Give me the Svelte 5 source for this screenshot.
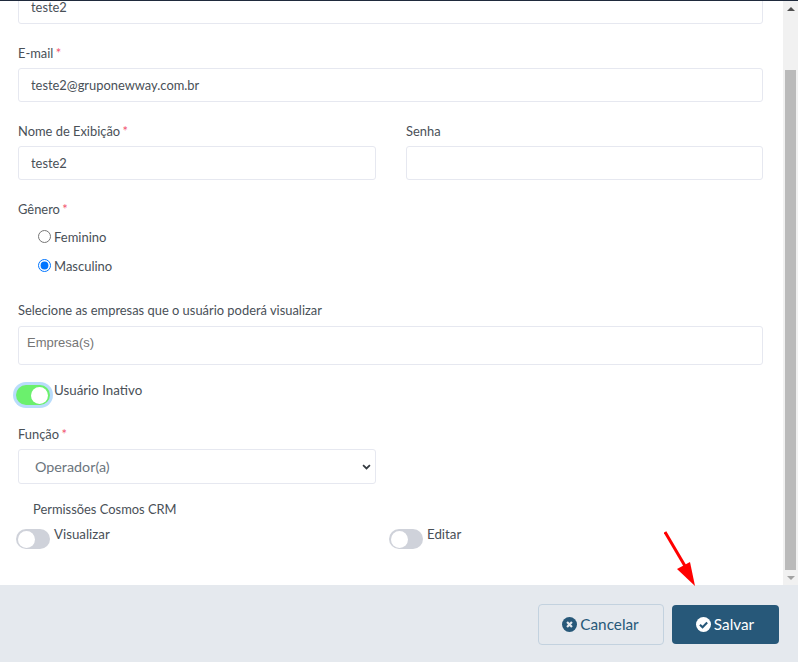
<script>
    let name = "teste2";
    let email = "teste2@gruponewway.com.br";
    let gender = "m";
</script>

<div class="modal">
    <div class="scroll">
        <form class="form">
            <input class="input first" type="text" value="teste2" />

            <div class="field">
                <label for="email">E-mail <span class="req">*</span></label>
                <input id="email" class="input" type="text" value={email} />
            </div>

            <div class="row">
                <div class="field">
                    <label for="nome">Nome de Exibição <span class="req">*</span></label>
                    <input id="nome" class="input" type="text" value={name} />
                </div>
                <div class="field">
                    <label for="senha">Senha</label>
                    <input id="senha" class="input" type="password" />
                </div>
            </div>

            <div class="gender">
                <span class="label">Gênero <span class="req">*</span></span>
                <label class="radio first-radio"><input type="radio" bind:group={gender} value="f" />Feminino</label>
                <label class="radio"><input type="radio" bind:group={gender} value="m" />Masculino</label>
            </div>

            <div class="companies">
                <span class="label">Selecione as empresas que o usuário poderá visualizar</span>
                <div class="multi">Empresa(s)</div>
            </div>

            <div class="switch-line inactive">
                <span class="switch on"><span class="knob"></span></span>
                <span>Usuário Inativo</span>
            </div>

            <div class="role">
                <label for="funcao">Função <span class="req">*</span></label>
                <div class="select-wrap">
                    <select id="funcao" class="select">
                        <option>Operador(a)</option>
                    </select>
                    <svg class="chev" viewBox="0 0 10 7" width="9" height="6">
                        <path d="M1 1.2 5 5.2 9 1.2" fill="none" stroke="#343a40" stroke-width="2" />
                    </svg>
                </div>
            </div>

            <div class="perm-title">Permissões Cosmos CRM</div>
            <div class="perms">
                <div class="switch-line">
                    <span class="switch"><span class="knob"></span></span>
                    <span>Visualizar</span>
                </div>
                <div class="switch-line">
                    <span class="switch"><span class="knob"></span></span>
                    <span>Editar</span>
                </div>
            </div>
        </form>

        <div class="scrollbar">
            <span class="arrow up"></span>
            <div class="track"><div class="thumb"></div></div>
            <span class="arrow down"></span>
        </div>
    </div>

    <div class="footer">
        <button class="btn cancel" type="button">
            <svg viewBox="0 0 16 16" width="15" height="15">
                <circle cx="8" cy="8" r="8" fill="#275879" />
                <path d="M5.4 5.4 10.6 10.6M10.6 5.4 5.4 10.6" stroke="#e5e9ee" stroke-width="2.4" />
            </svg>
            Cancelar
        </button>
        <button class="btn save" type="button">
            <svg viewBox="0 0 16 16" width="15" height="15">
                <circle cx="8" cy="8" r="8" fill="#fff" />
                <path d="M4.2 8.2 7 11 11.9 5.9" fill="none" stroke="#275879" stroke-width="2.2" />
            </svg>
            Salvar
        </button>
    </div>

    <svg class="pointer" viewBox="0 0 34 62" width="34" height="62">
        <path d="M1 3 21 37" stroke="#f00" stroke-width="3" />
        <path d="M13 40 26 33 31 57Z" fill="#f00" />
    </svg>
</div>

<style>
    :global(body) {
        margin: 0;
        background: #fff;
    }

    .modal {
        position: relative;
        width: 798px;
        height: 662px;
        overflow: hidden;
        display: flex;
        flex-direction: column;
        border-top: 1px solid #1f2a3c;
        box-sizing: border-box;
        font-family: Lato, "Liberation Sans", sans-serif;
        font-size: 12.9px;
        color: #495057;
    }

    .scroll {
        flex: 1;
        min-height: 0;
        display: flex;
        overflow: hidden;
    }

    .form {
        flex: 1;
        min-width: 0;
        padding: 0 20px 0 18px;
    }

    .input,
    .select {
        display: block;
        width: 100%;
        height: 34px;
        box-sizing: border-box;
        border: 1px solid #e6e8f0;
        border-radius: 3px;
        background: #fff;
        padding: 0 12px 1px;
        font: inherit;
        color: #495057;
        outline: none;
    }

    .first {
        margin-top: -11px;
    }

    label,
    .label {
        display: block;
        line-height: 20px;
    }

    .field {
        padding-top: 19px;
    }

    .field label {
        margin-bottom: 5px;
    }

    .req {
        margin-left: -1px;
        color: #f1536e;
    }

    .row {
        display: grid;
        grid-template-columns: 358px 357px;
        column-gap: 30px;
    }

    .gender {
        padding-top: 19px;
    }

    .radio {
        display: flex;
        align-items: center;
        height: 20px;
        padding-left: 20px;
        margin-top: 9px;
        font-size: 13px;
    }

    .first-radio {
        margin-top: 8px;
    }

    .radio input {
        width: 13px;
        height: 13px;
        margin: -2px 3px 0 0;
    }

    .companies {
        padding-top: 24px;
    }

    .multi {
        height: 39px;
        box-sizing: border-box;
        margin-top: 6px;
        border: 1px solid #e6e8f0;
        border-radius: 3px;
        padding: 7px 8px;
        font-family: "Liberation Sans", sans-serif;
        font-size: 13px;
        line-height: 18px;
        color: #757575;
    }

    .switch-line {
        display: flex;
        align-items: flex-start;
        gap: 4px;
        font-size: 13.3px;
        line-height: 20px;
    }

    .inactive {
        margin-top: 15px;
        height: 34px;
    }

    .switch {
        position: relative;
        display: block;
        width: 34px;
        height: 20px;
        margin: 5px 0 0 -2px;
        border-radius: 10px;
        background: #cfd2da;
    }

    .switch.on {
        background: #6bf06d;
        box-shadow: 0 0 0 3px #b9dcfb;
    }

    .knob {
        position: absolute;
        left: 2px;
        top: 1.5px;
        width: 17px;
        height: 17px;
        border-radius: 50%;
        background: #fff;
    }

    .on .knob {
        left: 15px;
    }

    .role {
        padding-top: 10px;
    }

    .role label {
        margin-bottom: 5px;
    }

    .select-wrap {
        position: relative;
        width: 358px;
    }

    .select {
        height: 35px;
        padding: 0 16px 1px;
        font-size: 14.3px;
        color: #6c757d;
        appearance: none;
    }

    .chev {
        position: absolute;
        right: 5px;
        top: 15px;
    }

    .perm-title {
        margin-top: 15px;
        padding-left: 15px;
        line-height: 20px;
    }

    .perms {
        display: grid;
        grid-template-columns: 373px 1fr;
        margin-top: 5px;
    }

    .scrollbar {
        flex: none;
        width: 15px;
        display: flex;
        flex-direction: column;
        align-items: center;
        background: #f1f1f1;
    }

    .track {
        flex: 1;
        width: 100%;
        padding: 53px 2px 0;
        box-sizing: border-box;
    }

    .thumb {
        height: 500px;
        background: #bababa;
    }

    .arrow {
        flex: none;
        width: 0;
        height: 0;
        margin: 6px 0;
        border-left: 4px solid transparent;
        border-right: 4px solid transparent;
    }

    .up {
        border-bottom: 4px solid #505050;
    }

    .down {
        border-top: 4px solid #a3a3a3;
    }

    .footer {
        flex: none;
        height: 77px;
        display: flex;
        justify-content: flex-end;
        align-items: flex-start;
        gap: 8px;
        padding: 19px 19px 0 0;
        box-sizing: border-box;
        background: #e5e9ee;
    }

    .btn {
        display: flex;
        align-items: center;
        justify-content: center;
        gap: 3px;
        height: 41px;
        padding: 0 1px 1px 0;
        border-radius: 4px;
        font-family: Lato, "Liberation Sans", sans-serif;
        font-size: 15.3px;
    }

    .cancel {
        width: 126px;
        background: transparent;
        border: 1px solid #c3d2df;
        color: #275879;
    }

    .save {
        width: 107px;
        height: 39px;
        margin-top: 1px;
        background: #275879;
        border: none;
        color: #fff;
    }

    .pointer {
        position: absolute;
        left: 664px;
        top: 528px;
    }
</style>
